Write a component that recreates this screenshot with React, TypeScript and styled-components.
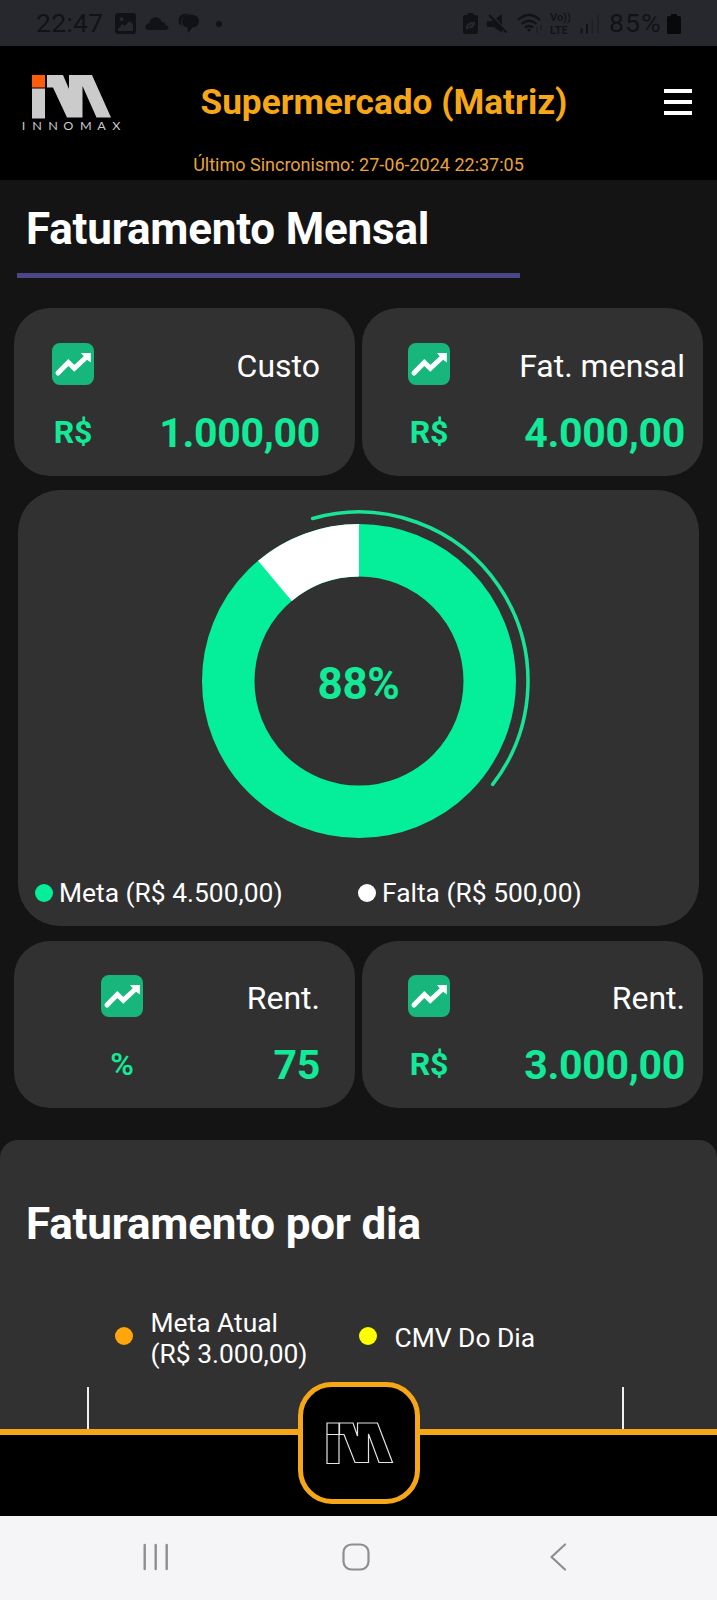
import React from 'react';
import styled, { createGlobalStyle } from 'styled-components';

const c = {
  orange: '#f6a717',
  green: '#05ef9a',
  valueGreen: '#13ea98',
  card: '#313131',
  page: '#141414',
  status: '#27282d',
  statusInk: '#111216',
  nav: '#f5f5f8',
  navInk: '#8e8e90',
};

const GlobalStyle = createGlobalStyle`
  * { box-sizing: border-box; }
  body { margin: 0; background: ${c.page}; font-family: Roboto, "Liberation Sans", sans-serif; color: #fff; }
  svg { display: block; flex: none; }
`;

const Screen = styled.div`
  width: 717px;
  height: 1600px;
  display: flex;
  flex-direction: column;
  overflow: hidden;
  background: ${c.page};
`;

const StatusBar = styled.div`
  height: 46px;
  flex: none;
  display: flex;
  align-items: center;
  justify-content: space-between;
  padding: 1px 36px 0 36px;
  background: ${c.status};
  color: ${c.statusInk};
`;

const StatusGroup = styled.div`
  display: flex;
  align-items: center;
`;

const StatusText = styled.span<{ $w: number; $ls?: number }>`
  width: ${p => p.$w}px;
  font-size: 26.5px;
  line-height: 44px;
  padding-bottom: 1px;
  letter-spacing: ${p => p.$ls ?? 0}px;
  white-space: nowrap;
`;

const StatusIcon = styled.svg<{ $ml?: number }>`
  margin-left: ${p => p.$ml ?? 9}px;
`;

const Carrier = styled.div`
  width: 22px;
  margin-left: 6px;
  display: flex;
  flex-direction: column;
  font-size: 11px;
  font-weight: 600;
  line-height: 13px;
  white-space: nowrap;
`;

const Header = styled.header`
  height: 134px;
  flex: none;
  background: #000;
`;

const HeaderRow = styled.div`
  height: 110px;
  display: grid;
  grid-template-columns: 130px 1fr 79px;
  align-items: center;
  padding-top: 1px;
`;

const Brand = styled.div`
  display: flex;
  flex-direction: column;
  padding: 3px 0 0 22px;
`;

const BrandMark = styled.svg`
  margin-left: 10px;
`;

const BrandName = styled.div`
  width: 98px;
  margin-top: 1px;
  display: flex;
  justify-content: space-between;
  font: 400 10.5px/12px Lato, sans-serif;
  color: #c9c9c9;

  span { transform: scaleX(1.2); }
`;

const StoreName = styled.h1`
  margin: 0;
  font-size: 35.2px;
  font-weight: 700;
  line-height: 40px;
  text-align: center;
  white-space: nowrap;
  color: ${c.orange};
`;

const MenuButton = styled.button`
  justify-self: end;
  width: 28px;
  height: 26px;
  margin-right: 25px;
  padding: 0;
  border: 0;
  background: none;
  display: flex;
  flex-direction: column;
  justify-content: space-between;

  span { width: 28px; height: 4px; background: #fff; }
`;

const SyncLine = styled.div`
  font-size: 18px;
  line-height: 18px;
  text-align: center;
  color: #e9a33c;
`;

const SectionTitle = styled.h2`
  margin: 0;
  font-size: 44px;
  font-weight: 700;
  line-height: 50px;
  letter-spacing: -0.2px;
  white-space: nowrap;
`;

const MonthHeading = styled.div`
  width: 502.5px;
  height: 98px;
  flex: none;
  margin: 0 0 30px 17px;
  padding: 24px 0 0 9px;
  border-bottom: 5px solid #4a4785;
`;

const CardRow = styled.div<{ $h: number; $mb: number }>`
  display: grid;
  grid-template-columns: 341px 341px;
  gap: 7px;
  height: ${p => p.$h}px;
  flex: none;
  margin: 0 14px ${p => p.$mb}px;
`;

const Card = styled.article<{ $left: number; $right: number; $lift?: number }>`
  display: flex;
  align-items: center;
  justify-content: space-between;
  padding: 0 ${p => p.$right}px ${p => p.$lift ?? 0}px ${p => p.$left}px;
  border-radius: 36px;
  background: ${c.card};
`;

const CardUnit = styled.div<{ $weight: number }>`
  width: 42px;
  height: 98px;
  display: flex;
  flex-direction: column;
  align-items: center;
  gap: 27px;
  font-size: 32px;
  font-weight: ${p => p.$weight};
  line-height: 40px;
  letter-spacing: -0.2px;
  color: ${c.valueGreen};
`;

const CardData = styled.div`
  height: 92px;
  display: flex;
  flex-direction: column;
  align-items: flex-end;
  gap: 22px;
`;

const CardLabel = styled.div`
  font-size: 32px;
  line-height: 40px;
`;

const CardValue = styled.div`
  font-size: 41px;
  font-weight: 700;
  line-height: 50px;
  letter-spacing: -0.3px;
  color: ${c.valueGreen};
`;

const GoalCard = styled.section`
  height: 436px;
  flex: none;
  margin: 0 18px 15px;
  padding-top: 16px;
  border-radius: 42px;
  background: ${c.card};
`;

const ChartWrap = styled.div`
  height: 350px;
  display: grid;
  place-items: center;

  > * { grid-area: 1 / 1; }
`;

const ChartPercent = styled.div`
  padding-top: 6px;
  font-size: 44px;
  font-weight: 700;
  line-height: 50px;
  letter-spacing: -0.3px;
  color: ${c.valueGreen};
`;

const GoalLegend = styled.div`
  display: grid;
  grid-template-columns: 323px 1fr;
  padding: 20px 0 0 17px;
`;

const GoalLegendItem = styled.div`
  display: flex;
  align-items: center;
  gap: 6px;
  font-size: 26.4px;
  line-height: 34px;
  white-space: nowrap;
`;

const Dot = styled.i<{ $color: string; $top?: number }>`
  width: 18px;
  height: 18px;
  flex: none;
  margin-top: ${p => p.$top ?? 0}px;
  border-radius: 9px;
  background: ${p => p.$color};
`;

const DaySection = styled.section`
  height: 289px;
  flex: none;
  display: flex;
  flex-direction: column;
  padding-top: 59px;
  border-radius: 18px 18px 0 0;
  background: ${c.card};
`;

const DayTitle = styled(SectionTitle)`
  padding-left: 26px;
`;

const DayLegend = styled.div`
  display: grid;
  grid-template-columns: 244px 1fr;
  align-items: center;
  height: 62px;
  margin: 58.5px 0 0 114.5px;
`;

const DayLegendItem = styled.div`
  display: flex;
  align-items: center;
  gap: 18px;
  font-size: 26.4px;
  line-height: 31.3px;
`;

const PlotFrame = styled.div`
  width: 537px;
  height: 42px;
  margin: auto 0 0 86.5px;
  border: solid #efefef;
  border-width: 0 2px;
`;

const BottomBar = styled.footer`
  position: relative;
  height: 87px;
  flex: none;
  border-top: 6px solid ${c.orange};
  background: #000;
`;

const HomeButton = styled.button`
  position: absolute;
  left: 297.5px;
  top: -53px;
  width: 122px;
  height: 122px;
  padding: 0 0 0 3px;
  display: grid;
  place-items: center;
  border: 5px solid ${c.orange};
  border-radius: 34px;
  background: #000;
`;

const SystemNav = styled.nav`
  height: 84px;
  flex: none;
  display: flex;
  align-items: center;
  padding: 0 0 2px 142px;
  background: ${c.nav};
`;

const NavGlyph = styled.svg<{ $gap?: number }>`
  margin-right: ${p => p.$gap ?? 0}px;
`;

function TrendIcon() {
  return (
    <svg width="42" height="42" viewBox="0 0 42 42">
      <rect width="42" height="42" rx="8" fill="#17b67c" />
      <path d="M6 30 16.3 19.5 22.3 25.3 34 14.5" fill="none" stroke="#fff" strokeWidth="5" strokeLinecap="round" />
      <path d="M29 10H38.8V19.5L36 17.5 31.5 13Z" fill="#fff" />
    </svg>
  );
}

type MetricProps = { unit: string; label: string; value: string; left: number; right: number; lift?: number };

function Metric({ unit, label, value, left, right, lift }: MetricProps) {
  return (
    <Card $left={left} $right={right} $lift={lift}>
      <CardUnit $weight={unit === '%' ? 600 : 700}>
        <TrendIcon />
        <span>{unit}</span>
      </CardUnit>
      <CardData>
        <CardLabel>{label}</CardLabel>
        <CardValue>{value}</CardValue>
      </CardData>
    </Card>
  );
}

function polar(r: number, deg: number) {
  const a = (deg * Math.PI) / 180;
  return `${(175 + r * Math.sin(a)).toFixed(2)} ${(175 - r * Math.cos(a)).toFixed(2)}`;
}

function GoalDonut() {
  return (
    <svg width="350" height="350" viewBox="0 0 350 350" fill="none">
      <circle cx="175" cy="175" r="130.75" stroke={c.green} strokeWidth="52.5" />
      <path d={`M${polar(130.75, -40)}A130.75 130.75 0 0 1 ${polar(130.75, 0)}`} stroke="#fff" strokeWidth="52.5" />
      <path
        d={`M${polar(169, -15.9)}A169 169 0 0 1 ${polar(169, 127.7)}`}
        stroke="#19e396"
        strokeWidth="3.6"
        strokeLinecap="round"
      />
    </svg>
  );
}

export default function App() {
  return (
    <>
      <GlobalStyle />
      <Screen>
        <StatusBar>
          <StatusGroup>
            <StatusText $w={70} $ls={0.3}>22:47</StatusText>
            <StatusIcon width="21" height="21" viewBox="0 0 21 21">
              <path
                fillRule="evenodd"
                fill={c.statusInk}
                d="M3 0H18Q21 0 21 3V18Q21 21 18 21H3Q0 21 0 18V3Q0 0 3 0ZM3 16.5V18H18V11L14.5 8 9.5 13 7 11ZM6.5 4.2A2 2 0 1 0 6.6 8.2 2 2 0 1 0 6.5 4.2Z"
              />
            </StatusIcon>
            <StatusIcon width="24" height="14" viewBox="0 0 24 14">
              <path fill={c.statusInk} d="M4 13Q0 12.5 .4 9.5 1 6.5 4.3 6.3 5 1 10 .3 15 0 17 5 20 5 20.5 8 23.5 8.5 23.5 11 23 13 21 13Z" />
            </StatusIcon>
            <StatusIcon width="22" height="21" viewBox="0 0 22 21">
              <path fill={c.statusInk} d="M.5 8Q.5 1 8 .8L13 1Q5 1.500 3.500 7 2.800 10 4 13Q.5 11.500 .5 8Z" />
              <path fill={c.statusInk} d="M12.700 1.500Q21 2 21 8.500 20.500 14 14.500 14.500L10 20 9.300 14.500Q4 13.500 4 8 5 1.700 12.700 1.500Z" />
            </StatusIcon>
            <StatusIcon $ml={16} width="6" height="6" viewBox="0 0 6 6">
              <circle cx="3" cy="3" r="3" fill={c.statusInk} />
            </StatusIcon>
          </StatusGroup>
          <StatusGroup>
            <StatusIcon width="15" height="21" viewBox="0 0 15 21">
              <path fill={c.statusInk} d="M4.5 0H10.5V2H13Q15 2 15 4V19Q15 21 13 21H2Q0 21 0 19V4Q0 2 2 2H4.5Z" />
              <path fill={c.status} d="M3 15.5Q2.500 9 12 8.500 12.500 16 5.500 15L4 17Z" />
              <path fill="none" stroke={c.statusInk} strokeWidth="1" d="M5 14 9.500 11" />
            </StatusIcon>
            <StatusIcon $ml={9} width="21" height="20" viewBox="0 0 21 20">
              <path fill={c.statusInk} d="M0 7H5L7 5.2 15 14V19L7 13H0ZM9 4.5 15 0V11Z" />
              <path stroke={c.statusInk} strokeWidth="2.2" d="M2 1 19.5 18.5" />
            </StatusIcon>
            <StatusIcon width="27" height="21" viewBox="0 0 27 21" fill="none" stroke={c.statusInk} strokeWidth="2.2">
              <path d="M1 7Q12 -3 23 7M4.5 11Q12 4.5 19.5 11M8 14.5Q12 11.5 16 14.5" />
              <circle cx="12" cy="17" r="1.6" fill={c.statusInk} stroke="none" />
              <path d="M20 14V20M24 12V18" strokeWidth="1.4" opacity=".5" />
            </StatusIcon>
            <Carrier><span>Vo))</span><span>LTE</span></Carrier>
            <StatusIcon $ml={8} width="19" height="20" viewBox="0 0 19 20" stroke={c.statusInk} strokeWidth="2">
              <path d="M1.5 14.5V19.5M7 10V19.5" />
              <path d="M12.5 6V19.5M18 1V19.5" opacity=".35" />
            </StatusIcon>
            <StatusIcon $ml={10} width="0" height="1" />
            <StatusText $w={57} $ls={1.2}>85%</StatusText>
            <StatusIcon $ml={1} width="14" height="20" viewBox="0 0 14 20">
              <path fill="#08090b" d="M4 0H10V2H12.5Q14 2 14 3.5V18.5Q14 20 12.5 20H1.5Q0 20 0 18.5V3.5Q0 2 1.5 2H4Z" />
            </StatusIcon>
          </StatusGroup>
        </StatusBar>

        <Header>
          <HeaderRow>
            <Brand>
              <BrandMark width="80" height="44" viewBox="0 0 80 44">
                <path fill="#ff5c0c" d="M0 0H13V12.5H0Z" />
                <path fill="#cbcbcb" d="M0 13.5H13V43.5H0ZM15 0H31L37 14V0H60L79 42.5H64.5L50.5 11V42.5H35L21 12.5H15Z" />
              </BrandMark>
              <BrandName>
                {'INNOMAX'.split('').map((ch, i) => <span key={i}>{ch}</span>)}
              </BrandName>
            </Brand>
            <StoreName>Supermercado (Matriz)</StoreName>
            <MenuButton aria-label="Menu"><span /><span /><span /></MenuButton>
          </HeaderRow>
          <SyncLine>Último Sincronismo: 27-06-2024 22:37:05</SyncLine>
        </Header>

        <MonthHeading>
          <SectionTitle>Faturamento Mensal</SectionTitle>
        </MonthHeading>

        <CardRow $h={168} $mb={14}>
          <Metric unit="R$" label="Custo" value="1.000,00" left={38} right={35} />
          <Metric unit="R$" label="Fat. mensal" value="4.000,00" left={46} right={18} />
        </CardRow>

        <GoalCard>
          <ChartWrap>
            <GoalDonut />
            <ChartPercent>88%</ChartPercent>
          </ChartWrap>
          <GoalLegend>
            <GoalLegendItem><Dot $color={c.green} />Meta (R$ 4.500,00)</GoalLegendItem>
            <GoalLegendItem><Dot $color="#fff" />Falta (R$ 500,00)</GoalLegendItem>
          </GoalLegend>
        </GoalCard>

        <CardRow $h={167} $mb={32}>
          <Metric unit="%" label="Rent." value="75" left={87} right={35} lift={1} />
          <Metric unit="R$" label="Rent." value="3.000,00" left={46} right={18} lift={1} />
        </CardRow>

        <DaySection>
          <DayTitle>Faturamento por dia</DayTitle>
          <DayLegend>
            <DayLegendItem><Dot $color="#ffa60d" $top={-5} /><span>Meta Atual<br />(R$ 3.000,00)</span></DayLegendItem>
            <DayLegendItem><Dot $color="#ffff00" $top={-5} /><span>CMV Do Dia</span></DayLegendItem>
          </DayLegend>
          <PlotFrame />
        </DaySection>

        <BottomBar>
          <HomeButton aria-label="Início">
            <svg width="68" height="43" viewBox="0 0 68 43" fill="none" stroke="#e4e4e4" strokeWidth="1.2">
              <path d="M1 1H13V12.5H1ZM1 12.5H13V41.5H1ZM13.5 1H27L31.5 14V1H51.5L66.5 40.5H53L42.5 12V40.5H29L18 12.5H13.5Z" />
            </svg>
          </HomeButton>
        </BottomBar>

        <SystemNav>
          <NavGlyph $gap={174} width="26" height="28" viewBox="0 0 26 28" stroke={c.navInk} strokeWidth="2.4" strokeLinecap="round">
            <path d="M2.7 2V26M13.7 2V26M24.700 2V26" />
          </NavGlyph>
          <NavGlyph $gap={179.5} width="28" height="28" viewBox="0 0 28 28" fill="none" stroke={c.navInk} strokeWidth="2.2">
            <rect x="1.5" y="1.5" width="25" height="25" rx="8" />
          </NavGlyph>
          <NavGlyph width="17" height="28" viewBox="0 0 17 28" fill="none" stroke={c.navInk} strokeWidth="2.2" strokeLinecap="round" strokeLinejoin="round">
            <path d="M15 1.5 1.5 14 15 26.5" />
          </NavGlyph>
        </SystemNav>
      </Screen>
    </>
  );
}
